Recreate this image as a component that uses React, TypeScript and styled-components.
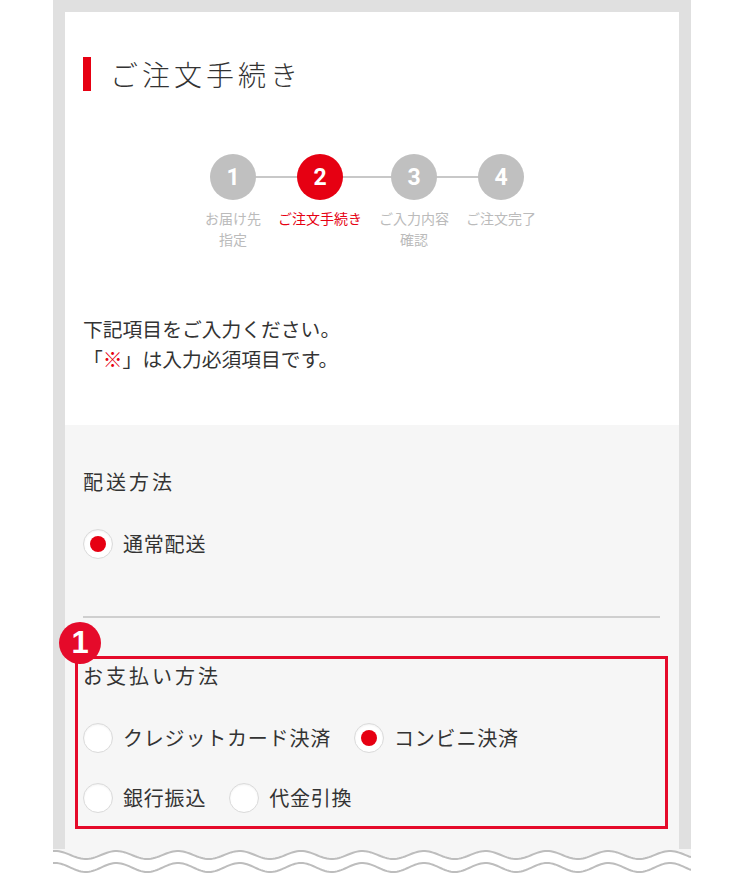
import React from "react";
import styled, { createGlobalStyle } from "styled-components";

const RED = "#e60012";
const MARK = "#e50a2a";

const steps = [
  { no: 1, label: ["お届け先", "指定"] },
  { no: 2, label: ["ご注文手続き"], active: true },
  { no: 3, label: ["ご入力内容", "確認"] },
  { no: 4, label: ["ご注文完了"] },
];

// cut-off edge under the device frame
const WAVE_W = 638;
const PERIOD = 61.5;
const wave = (mid: number, amp: number) => {
  const pts: string[] = [];
  for (let x = 0; x <= WAVE_W; x += 2) {
    const y = mid - amp * Math.cos((2 * Math.PI * (x - 2)) / PERIOD);
    pts.push(`${x},${y.toFixed(2)}`);
  }
  return pts;
};
const topWave = wave(6, 4);
const lowWave = wave(18.5, 4.5);

const App = () => {
  return (
    <>
      <GlobalStyle />
      <Device>
        <Panel>
          <PageTitle>ご注文手続き</PageTitle>
          <Stepper>
            {steps.map((s) => (
              <Step key={s.no}>
                <StepCircle $active={s.active}>{s.no}</StepCircle>
                <StepLabel $active={s.active}>
                  {s.label.map((l) => (
                    <span key={l}>{l}</span>
                  ))}
                </StepLabel>
              </Step>
            ))}
          </Stepper>
          <Intro>
            下記項目をご入力ください。
            <br />「<Req>※</Req>」は入力必須項目です。
          </Intro>
        </Panel>
        <FormArea>
          <SectionTitle>配送方法</SectionTitle>
          <RadioRow $top={33}>
            <Radio>
              <RadioMark $checked />
              通常配送
            </Radio>
          </RadioRow>
          <Divider />
          <Highlight>
            <Badge>1</Badge>
            <SectionTitle>お支払い方法</SectionTitle>
            <RadioRow $top={33}>
              <Radio>
                <RadioMark />
                クレジットカード決済
              </Radio>
              <Radio>
                <RadioMark $checked />
                コンビニ決済
              </Radio>
            </RadioRow>
            <RadioRow $top={30}>
              <Radio>
                <RadioMark />
                銀行振込
              </Radio>
              <Radio>
                <RadioMark />
                代金引換
              </Radio>
            </RadioRow>
          </Highlight>
        </FormArea>
      </Device>
      <Cut width={WAVE_W} height={28} viewBox={`0 0 ${WAVE_W} 28`}>
        <path d={`M0,0 L${WAVE_W},0 L${[...topWave].reverse().join(" L")} Z`} fill="#f6f6f6" />
        <polyline points={topWave.join(" ")} fill="none" stroke="#bdbdbd" strokeWidth={2} />
        <polyline points={lowWave.join(" ")} fill="none" stroke="#bdbdbd" strokeWidth={2} />
      </Cut>
    </>
  );
};

export default App;

const GlobalStyle = createGlobalStyle`
  * { box-sizing: border-box; }
  body {
    margin: 0;
    background: #fff;
    color: #333;
    font-family: "Noto Sans CJK JP", "Noto Sans", sans-serif;
  }
`;

const Device = styled.div`
  width: 638px;
  margin-left: 53px;
  border: 12px solid #e0e0e0;
  border-bottom: 0;
  background: #f6f6f6;
`;

const Panel = styled.div`
  background: #fff;
  padding: 45px 18px 51px;
`;

const PageTitle = styled.h1`
  display: flex;
  align-items: center;
  gap: 19px;
  margin: 0;
  font-size: 28px;
  font-weight: 300;
  line-height: 34px;
  letter-spacing: 4px;
  color: #333;

  &::before {
    content: "";
    width: 8px;
    height: 34px;
    background: ${RED};
  }
`;

const Stepper = styled.ol`
  position: relative;
  display: flex;
  gap: 17px;
  width: fit-content;
  margin: 63px auto 0;
  padding: 0 3px 0 0;
  list-style: none;

  &::before {
    content: "";
    position: absolute;
    top: 22px;
    left: 28px;
    right: 38px;
    height: 2px;
    background: #c8c8c8;
  }
`;

const Step = styled.li`
  position: relative;
  display: flex;
  flex-direction: column;
  align-items: center;
`;

const StepCircle = styled.div<{ $active?: boolean }>`
  display: flex;
  align-items: center;
  justify-content: center;
  width: 46px;
  height: 46px;
  border-radius: 50%;
  background: ${({ $active }) => ($active ? RED : "#c0c0c0")};
  color: #fff;
  font-family: Roboto, "Liberation Sans", sans-serif;
  font-size: 23px;
  font-weight: 700;
`;

const StepLabel = styled.div<{ $active?: boolean }>`
  display: flex;
  flex-direction: column;
  align-items: center;
  margin-top: 8px;
  font-size: 14px;
  line-height: 21px;
  white-space: nowrap;
  color: ${({ $active }) => ($active ? RED : "#bbb")};
`;

const Intro = styled.p`
  margin: 64px 0 0;
  font-size: 19.8px;
  line-height: 30px;
`;

const Req = styled.span`
  color: ${RED};
`;

const FormArea = styled.div`
  padding: 43px 19px 20px 18px;
`;

const SectionTitle = styled.h2`
  margin: 0;
  font-size: 20px;
  font-weight: 400;
  line-height: 28px;
  letter-spacing: 3px;
`;

const RadioRow = styled.div<{ $top: number }>`
  display: flex;
  gap: 23px;
  margin-top: ${({ $top }) => $top}px;
`;

const Radio = styled.label`
  display: flex;
  align-items: center;
  gap: 10px;
  font-size: 20px;
  line-height: 30px;
  letter-spacing: 0.8px;
`;

const RadioMark = styled.span<{ $checked?: boolean }>`
  display: flex;
  align-items: center;
  justify-content: center;
  flex-shrink: 0;
  width: 30px;
  height: 30px;
  border-radius: 50%;
  background: #fff;
  border: 1px solid #dadada;
  box-shadow: inset 0 1px 2px rgba(0, 0, 0, 0.06);

  &::after {
    content: "";
    width: 16px;
    height: 16px;
    border-radius: 50%;
    background: ${({ $checked }) => ($checked ? RED : "transparent")};
  }
`;

const Divider = styled.hr`
  margin: 57px 0 0;
  border: 0;
  height: 2px;
  background: #cfcfcf;
`;

const Highlight = styled.div`
  position: relative;
  margin: 38px -8px 0 -8px;
  border: 3px solid ${MARK};
  padding: 3px 5px 13px;
`;

const Badge = styled.span`
  position: absolute;
  top: -37px;
  left: -19px;
  display: flex;
  align-items: center;
  justify-content: center;
  width: 42px;
  height: 42px;
  border-radius: 50%;
  background: ${MARK};
  color: #fff;
  font-family: "Liberation Sans", Arial, sans-serif;
  font-size: 31px;
  font-weight: 700;
`;

const Cut = styled.svg`
  display: block;
  margin-left: 53px;
`;
